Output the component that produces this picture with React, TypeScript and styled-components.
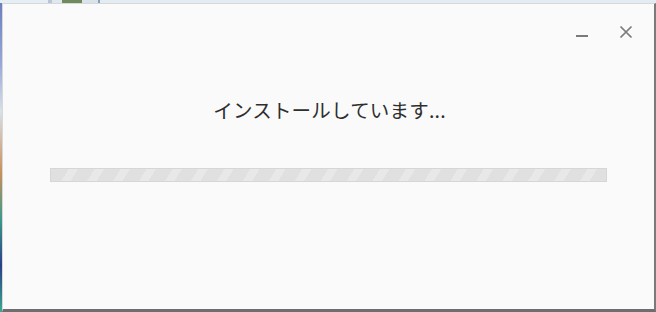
import React from "react";
import styled, { createGlobalStyle } from "styled-components";

const Global = createGlobalStyle`
  html, body { margin: 0; padding: 0; overflow: hidden; }
  body { font-family: "Noto Sans CJK JP", "Noto Sans", sans-serif; }
`;

const Desktop = styled.div`
  width: 656px;
  height: 312px;
  display: grid;
  grid-template-rows: 3px 1fr;
  grid-template-columns: 2px 1fr;
  background: #dde6ee;
`;

const TopStrip = styled.div`
  grid-column: 1 / 3;
  display: flex;
  background: #e4ecf3;
`;

const Thumb = styled.div<{ $w: number; $c: string }>`
  width: ${(p) => p.$w}px;
  background: ${(p) => p.$c};
`;

const LeftStrip = styled.div`
  background: linear-gradient(
    to bottom,
    #6a7fc0 0%,
    #9aa8d8 20%,
    #d8e0ea 35%,
    #c8905a 55%,
    #3a9a8a 70%,
    #2a3f8a 85%,
    #3aa890 100%
  );
`;

const Window = styled.div`
  background: #fafafa;
  border-top: 1px solid #d8d8d8;
  border-left: 1px solid #d8d8d8;
  border-right: 2px solid #7a7a7a;
  border-bottom: 3px solid #6e6e6e;
  display: flex;
  flex-direction: column;
  box-sizing: border-box;
`;

const TitleBar = styled.div`
  display: flex;
  justify-content: flex-end;
  align-items: center;
  height: 56px;
  padding-right: 16px;
  gap: 20px;
`;

const IconButton = styled.div`
  width: 24px;
  height: 24px;
  display: flex;
  align-items: center;
  justify-content: center;
  color: #777;
`;

const Message = styled.div`
  text-align: center;
  font-size: 19.5px;
  color: #2e2e2e;
  margin-top: 37px;
  line-height: 26px;
  letter-spacing: 0.2px;
  padding-left: 2px;
`;

const Track = styled.div`
  margin: 45px 47px 0 47px;
  height: 14px;
  box-sizing: border-box;
  border: 1px solid #d6d6d6;
  background-color: #e1e1e1;
  background-image: repeating-linear-gradient(
    -58deg,
    #e0e0e0 0px,
    #e0e0e0 14px,
    #e8e8e8 14px,
    #e8e8e8 22px
  );
`;

export default function App() {
  return (
    <>
      <Global />
      <Desktop>
        <TopStrip>
          <Thumb $w={48} $c="#e6eef5" />
          <Thumb $w={4} $c="#b9c6d6" />
          <Thumb $w={10} $c="#dfe8ef" />
          <Thumb $w={20} $c="#6f8a5c" />
          <Thumb $w={16} $c="#d9e3ec" />
          <Thumb $w={2} $c="#8aa0b8" />
        </TopStrip>
        <LeftStrip />
        <Window>
          <TitleBar>
            <IconButton>
              <svg width="14" height="14" viewBox="0 0 14 14">
                <rect x="1" y="10" width="12" height="2" fill="#7a7a7a" />
              </svg>
            </IconButton>
            <IconButton>
              <svg width="14" height="14" viewBox="0 0 14 14">
                <path d="M1.5 1.5 L12.5 12.5 M12.5 1.5 L1.5 12.5" stroke="#7a7a7a" strokeWidth="1.7" fill="none" />
              </svg>
            </IconButton>
          </TitleBar>
          <Message>インストールしています...</Message>
          <Track />
        </Window>
      </Desktop>
    </>
  );
}
